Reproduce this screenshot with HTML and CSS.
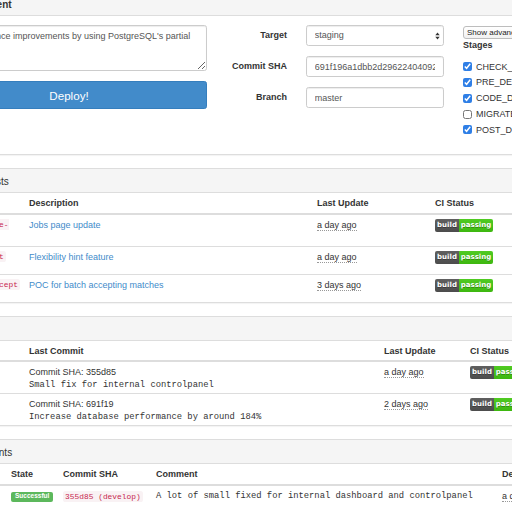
FILE: index.html
```html
<!DOCTYPE html>
<html>
<head>
<meta charset="utf-8">
<title>Deployments</title>
<link rel="stylesheet" href="styles.css">
</head>
<body>
<div class="page">

  <section class="panel">
    <div class="panel-heading"><h3 class="panel-title strong">New Deployment</h3></div>
    <div class="panel-body deploy-form">
      <div class="col-main">
        <textarea class="form-control comment" rows="3">SQL performance improvements by using PostgreSQL's partial indexes</textarea>
        <button class="btn-deploy" type="button">Deploy!</button>
      </div>
      <div class="form-fields">
        <label class="field-label">Target</label>
        <div class="select-wrap">
          <select class="form-control"><option>staging</option><option>production</option></select>
          <svg class="select-arrows" viewBox="0 0 5 8" aria-hidden="true"><polygon points="0.3,3.2 2.5,0.4 4.7,3.2" fill="#333"/><polygon points="0.3,4.8 2.5,7.6 4.7,4.8" fill="#333"/></svg>
        </div>
        <label class="field-label">Commit SHA</label>
        <input class="form-control" type="text" value="691f196a1dbb2d296224040926e4c2b8d9f0a1c3">
        <label class="field-label">Branch</label>
        <input class="form-control" type="text" value="master">
      </div>
      <div class="stages">
        <button class="btn-adv" type="button">Show advanced options</button>
        <div class="stages-title">Stages</div>
        <ul class="stage-list">
          <li><label><input type="checkbox" checked>CHECK_CONDITIONS</label></li>
          <li><label><input type="checkbox" checked>PRE_DEPLOY</label></li>
          <li><label><input type="checkbox" checked>CODE_DEPLOY</label></li>
          <li><label><input type="checkbox">MIGRATE_DATABASE</label></li>
          <li><label><input type="checkbox" checked>POST_DEPLOY</label></li>
        </ul>
      </div>
    </div>
  </section>

  <section class="panel">
    <div class="panel-heading"><h3 class="panel-title">My Pull Requests</h3></div>
    <table class="table">
      <colgroup><col class="w103"><col class="w288"><col class="w118"><col class="w120"><col></colgroup>
      <thead><tr><th>Branch</th><th>Description</th><th>Last Update</th><th>CI Status</th><th>Actions</th></tr></thead>
      <tbody>
        <tr>
          <td class="branch"><code>feature/job-page-update</code></td>
          <td><a href="#">Jobs page update</a></td>
          <td><abbr title="2 May">a day ago</abbr></td>
          <td><span class="badge"><span class="badge-l">build</span><span class="badge-r">passing</span></span></td>
          <td><button class="btn-sm" type="button">Deploy</button></td>
        </tr>
        <tr>
          <td class="branch"><code>feature/flexhint</code></td>
          <td><a href="#">Flexibility hint feature</a></td>
          <td><abbr title="2 May">a day ago</abbr></td>
          <td><span class="badge"><span class="badge-l">build</span><span class="badge-r">passing</span></span></td>
          <td><button class="btn-sm" type="button">Deploy</button></td>
        </tr>
        <tr>
          <td class="branch"><code>feature/bulk-accept</code></td>
          <td><a href="#">POC for batch accepting matches</a></td>
          <td><abbr title="30 April">3 days ago</abbr></td>
          <td><span class="badge"><span class="badge-l">build</span><span class="badge-r">passing</span></span></td>
          <td><button class="btn-sm" type="button">Deploy</button></td>
        </tr>
      </tbody>
    </table>
  </section>

  <section class="panel">
    <div class="panel-heading"><h3 class="panel-title">Branches</h3></div>
    <table class="table">
      <colgroup><col class="w103"><col class="w355"><col class="w86"><col class="w110"><col></colgroup>
      <thead><tr><th>Branch</th><th>Last Commit</th><th>Last Update</th><th>CI Status</th><th>Actions</th></tr></thead>
      <tbody>
        <tr>
          <td class="branch"><code>develop</code></td>
          <td><div>Commit SHA: 355d85</div><div class="mono">Small fix for internal controlpanel</div></td>
          <td><abbr title="2 May">a day ago</abbr></td>
          <td><span class="badge"><span class="badge-l">build</span><span class="badge-r">passing</span></span></td>
          <td><button class="btn-sm" type="button">Deploy</button></td>
        </tr>
        <tr>
          <td class="branch"><code>master</code></td>
          <td><div>Commit SHA: 691f19</div><div class="mono">Increase database performance by around 184%</div></td>
          <td><abbr title="1 May">2 days ago</abbr></td>
          <td><span class="badge"><span class="badge-l">build</span><span class="badge-r">passing</span></span></td>
          <td><button class="btn-sm" type="button">Deploy</button></td>
        </tr>
      </tbody>
    </table>
  </section>

  <section class="panel">
    <div class="panel-heading"><h3 class="panel-title">Past Deployments</h3></div>
    <table class="table">
      <colgroup><col class="w85"><col class="w52"><col class="w93"><col class="w346"><col class="w90"><col></colgroup>
      <thead><tr><th>Target</th><th>State</th><th>Commit SHA</th><th>Comment</th><th>Deployed</th><th>Actions</th></tr></thead>
      <tbody>
        <tr>
          <td>staging</td>
          <td><span class="label">Successful</span></td>
          <td><code>355d85 (develop)</code></td>
          <td class="mono">A lot of small fixed for internal dashboard and controlpanel</td>
          <td><abbr title="2 May">a day ago</abbr></td>
          <td><button class="btn-sm" type="button">Rollback</button></td>
        </tr>
      </tbody>
    </table>
  </section>

</div>
</body>
</html>
```

FILE: styles.css
```css
html, body {
  margin: 0;
  padding: 0;
  overflow: hidden;
  background: #fff;
}

body {
  font-family: "Liberation Sans", Arial, Helvetica, sans-serif;
  font-size: 9px;
  line-height: 12.5px;
  color: #333;
}

.page {
  width: 733px;
  margin: -9px 0 0 -80px;
}

/* Panels */
.panel {
  border: 1px solid #ddd;
  border-radius: 2.6px;
  margin-bottom: 13px;
  background: #fff;
  box-shadow: 0 1px 1px rgba(0, 0, 0, 0.05);
  overflow: hidden;
}

.panel-heading {
  background: #f5f5f5;
  border-bottom: 1px solid #ddd;
  padding: 7px 10px 5px;
}

.panel-title {
  margin: 0;
  font-size: 10px;
  line-height: 11px;
  font-weight: normal;
  color: #333;
}

.panel-title.strong {
  font-weight: bold;
}

/* New deployment form */
.deploy-form {
  display: flex;
  align-items: flex-start;
  padding: 9px 10px;
}

.col-main {
  flex: none;
  width: 276px;
  display: flex;
  flex-direction: column;
  gap: 10px;
}

.form-control {
  box-sizing: border-box;
  display: block;
  width: 100%;
  height: 21px;
  margin: 0;
  padding: 0 7.7px;
  font-family: "Liberation Sans", Arial, Helvetica, sans-serif;
  font-size: 9px;
  line-height: 12.5px;
  color: #555;
  background: #fff;
  border: 1px solid #ccc;
  border-radius: 2.6px;
  box-shadow: inset 0 1px 1px rgba(0, 0, 0, 0.075);
  outline: none;
}

textarea.form-control {
  height: 46px;
  padding: 4px 7.7px;
  resize: vertical;
}

.btn-deploy {
  display: block;
  width: 100%;
  height: 28px;
  margin: 0;
  padding: 0;
  background: #428bca;
  border: 1px solid #357ebd;
  border-radius: 2.6px;
  color: #fff;
  font-family: "Liberation Sans", Arial, Helvetica, sans-serif;
  font-size: 11.6px;
  line-height: 15px;
}

.form-fields {
  flex: none;
  width: 218px;
  margin-left: 19px;
  display: grid;
  grid-template-columns: 61px 138px;
  column-gap: 19px;
  row-gap: 10px;
  align-items: center;
}

.field-label {
  text-align: right;
  font-weight: bold;
  white-space: nowrap;
}

.select-wrap {
  position: relative;
}

.select-wrap select {
  appearance: none;
  -webkit-appearance: none;
  padding-right: 16px;
}

.select-arrows {
  position: absolute;
  right: 4px;
  top: 7px;
  width: 5px;
  height: 8px;
  pointer-events: none;
}

.stages {
  flex: 1;
  min-width: 0;
  margin-left: 19px;
}

.btn-adv {
  display: block;
  height: 13px;
  margin: 1px 0 0;
  padding: 0 3px;
  font-family: "Liberation Sans", Arial, Helvetica, sans-serif;
  font-size: 8px;
  line-height: 11px;
  color: #222;
  white-space: nowrap;
  background: linear-gradient(#fff, #f1f1f1);
  border: 1px solid #bdbdbd;
  border-radius: 3px;
}

.stages-title {
  font-weight: bold;
}

.stage-list {
  list-style: none;
  margin: 9px 0 9px;
  padding: 0;
}

.stage-list li {
  height: 12.75px;
  margin-bottom: 3px;
}

.stage-list label {
  display: flex;
  align-items: center;
  height: 12.75px;
  white-space: nowrap;
}

.stage-list input {
  width: 9px;
  height: 9px;
  margin: 0 4px 0 0;
  accent-color: #2f7fe6;
  flex: none;
}

/* Tables */
.table {
  width: 100%;
  border-collapse: collapse;
  table-layout: fixed;
}

.w52 { width: 52px; }
.w85 { width: 85px; }
.w86 { width: 86px; }
.w90 { width: 90px; }
.w93 { width: 93px; }
.w103 { width: 103px; }
.w110 { width: 110px; }
.w118 { width: 118px; }
.w120 { width: 120px; }
.w288 { width: 288px; }
.w346 { width: 346px; }
.w355 { width: 355px; }

.table th,
.table td {
  padding: 4px 5px 2px;
  text-align: left;
  vertical-align: top;
  line-height: 12.5px;
}

.table th {
  padding: 4px 5px 3px;
  font-weight: bold;
  border-bottom: 2px solid #ddd;
  white-space: nowrap;
}

.table td {
  border-top: 1px solid #ddd;
}

.table td.branch {
  padding-right: 0;
  font-family: "Liberation Mono", "Courier New", monospace;
  font-size: 7.9px;
  line-height: 12.5px;
}

a {
  color: #428bca;
  text-decoration: none;
}

abbr {
  text-decoration: none;
  border-bottom: 1px dotted #999;
  cursor: help;
}

code {
  font-family: "Liberation Mono", "Courier New", monospace;
  font-size: 7.9px;
  color: #c7254e;
  background: #f9f2f4;
  padding: 1px 2px;
  border-radius: 2.6px;
}

.mono {
  font-family: "Liberation Mono", "Courier New", monospace;
  font-size: 8.8px;
  white-space: nowrap;
}

.label {
  display: inline-block;
  background: #5cb85c;
  color: #fff;
  font-weight: bold;
  font-size: 6.5px;
  line-height: 1;
  padding: 1.5px 4px 2px;
  border-radius: 2px;
  white-space: nowrap;
  vertical-align: top;
  margin-top: 2px;
}

.badge {
  display: inline-flex;
  vertical-align: top;
  margin-top: 0;
  height: 13px;
  border-radius: 2px;
  overflow: hidden;
  font-family: "DejaVu Sans", Verdana, sans-serif;
  font-size: 7px;
  font-weight: bold;
  line-height: 13px;
  color: #fff;
  text-shadow: 0 1px 0 rgba(1, 1, 1, 0.3);
}

.badge-l {
  width: 24px;
  text-align: center;
  background: linear-gradient(rgba(187, 187, 187, 0.1), rgba(0, 0, 0, 0.1)), #555;
}

.badge-r {
  width: 34px;
  text-align: center;
  background: linear-gradient(rgba(187, 187, 187, 0.1), rgba(0, 0, 0, 0.1)), #4c1;
}

.btn-sm {
  display: inline-block;
  vertical-align: top;
  height: 21px;
  margin: 0;
  padding: 0 6px;
  font-family: "Liberation Sans", Arial, Helvetica, sans-serif;
  font-size: 8px;
  color: #333;
  background: #fff;
  border: 1px solid #ccc;
  border-radius: 2px;
}
```
